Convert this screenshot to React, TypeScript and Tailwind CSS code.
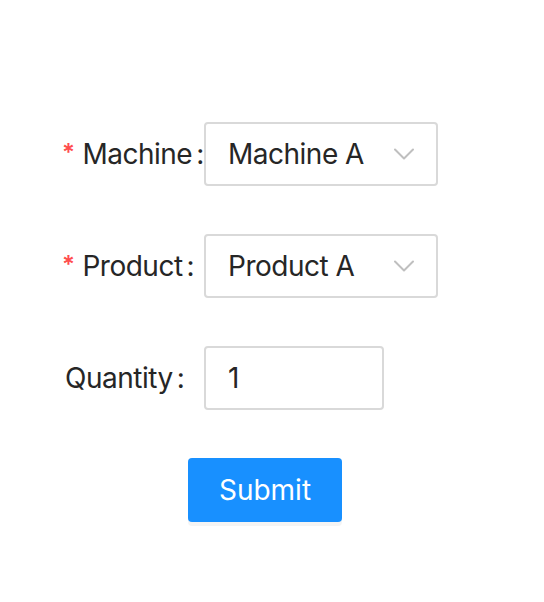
import React from "react";

const Chevron = () => (
  <svg width="20" height="12" viewBox="0 0 20 12" fill="none" className="shrink-0">
    <path d="M1 1.5 L10 10.5 L19 1.5" stroke="#bfbfbf" strokeWidth="2" strokeLinecap="round" strokeLinejoin="round" />
  </svg>
);

const Label = ({ text, required }: { text: string; required?: boolean }) => (
  <div className="w-[204px] shrink-0 flex items-center justify-start pl-[62px] text-[28px] text-[#262626] tracking-[-0.5px]">
    {required ? (
      <span className="text-[#ff4d4f] text-[24px] font-semibold mr-[8px] leading-none mb-[2px]">*</span>
    ) : (
      <span className="w-[3px]" />
    )}
    <span>{text}</span>
    <span className="ml-[4px]">:</span>
  </div>
);

export default function App() {
  return (
    <div
      className="w-[544px] h-[602px] bg-white pt-[122px]"
      style={{ fontFamily: "Inter, 'Noto Sans', sans-serif" }}
    >
      <div className="flex items-center h-[64px] mb-[48px]">
        <Label text="Machine" required />
        <div className="w-[234px] h-[64px] border-2 border-[#d9d9d9] rounded-[4px] flex items-center justify-between pl-[22px] pr-[22px] text-[28px] text-[#262626] tracking-[-0.5px]">
          <span>Machine A</span>
          <Chevron />
        </div>
      </div>
      <div className="flex items-center h-[64px] mb-[48px]">
        <Label text="Product" required />
        <div className="w-[234px] h-[64px] border-2 border-[#d9d9d9] rounded-[4px] flex items-center justify-between pl-[22px] pr-[22px] text-[28px] text-[#262626] tracking-[-0.5px]">
          <span>Product A</span>
          <Chevron />
        </div>
      </div>
      <div className="flex items-center h-[64px] mb-[48px]">
        <Label text="Quantity" />
        <div className="w-[180px] h-[64px] border-2 border-[#d9d9d9] rounded-[4px] flex items-center pl-[22px] text-[28px] text-[#262626]">
          <span>1</span>
        </div>
      </div>
      <div className="flex">
        <button className="ml-[188px] w-[154px] h-[64px] bg-[#1890ff] rounded-[4px] text-white text-[28px] shadow-[0_4px_0_rgba(0,0,0,0.045)]">
          Submit
        </button>
      </div>
    </div>
  );
}
